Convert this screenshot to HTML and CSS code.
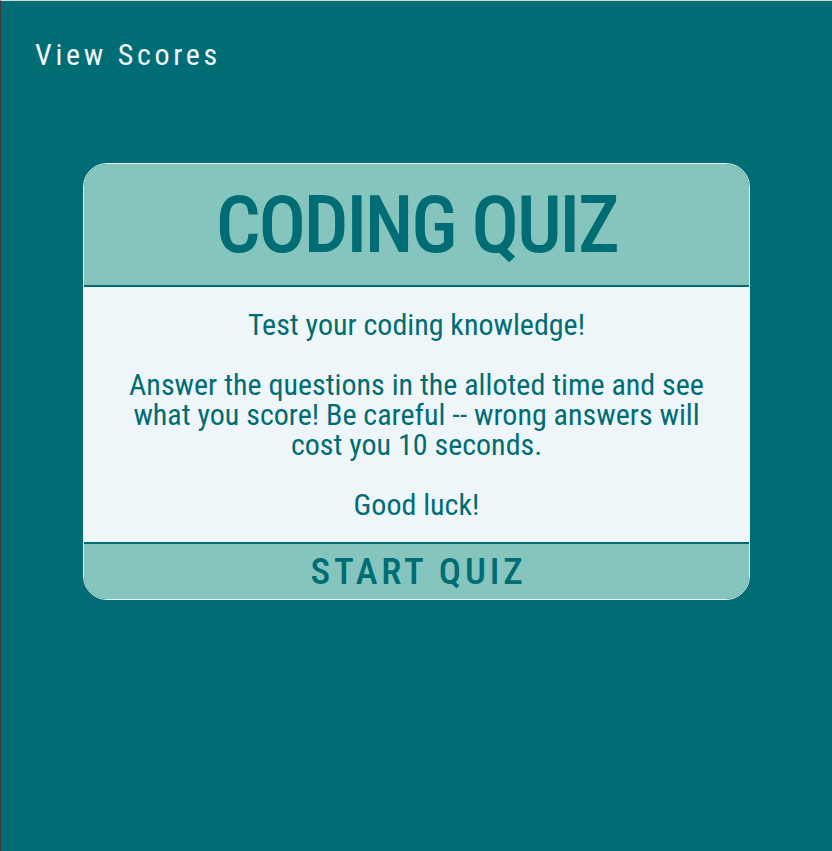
FILE: index.html
```html
<!DOCTYPE html>
<html lang="en">
<head>
<meta charset="utf-8">
<title>Coding Quiz</title>
<link rel="stylesheet" href="styles.css">
</head>
<body>
<header class="topbar">
  <a class="view-scores" href="#">View Scores</a>
</header>
<main class="main">
  <section class="card">
    <div class="card-header">
      <h1 class="title">CODING QUIZ</h1>
    </div>
    <div class="card-body">
      <p class="intro">Test your coding knowledge!<br><br>Answer the questions in the alloted time and see what you score! Be careful -- wrong answers will cost you 10 seconds.<br><br>Good luck!</p>
    </div>
    <button class="start-btn" type="button">START QUIZ</button>
  </section>
</main>
</body>
</html>
```
FILE: styles.css
```css
html {
  background: #006d74;
  border-top: 1px solid #d8dcdc;
  border-left: 1px solid #3c3c3c;
  min-height: 100%;
  box-sizing: border-box;
}
body {
  margin: 0;
  font-family: "Roboto Condensed", Roboto, sans-serif;
  font-stretch: condensed;
  color: #006d74;
}
.topbar {
  padding: 36px 0 0 34px;
}
.view-scores {
  display: inline-block;
  font-size: 30px;
  letter-spacing: 3.7px;
  color: #eef6f9;
  text-decoration: none;
}
.main {
  display: flex;
  justify-content: center;
  padding-top: 91px;
}
.card {
  width: 665px;
  border: 1px solid #e6f2f2;
  border-radius: 24px;
  overflow: hidden;
  display: flex;
  flex-direction: column;
}
.card-header {
  background: #86c5be;
  padding: 15px 0 13px;
  border-bottom: 2px solid #006d74;
  text-align: center;
}
.title {
  margin: 0;
  font-size: 79px;
  font-weight: 500;
  letter-spacing: -2.2px;
  line-height: 93px;
  color: #006d74;
}
.card-body {
  background: #eef6f9;
  padding: 23px 40px 22px;
  border-bottom: 2px solid #006d74;
}
.intro {
  margin: 0;
  font-size: 30px;
  line-height: 30px;
  text-align: center;
  color: #006d74;
}
.start-btn {
  display: block;
  width: 100%;
  margin: 0;
  border: 0;
  background: #86c5be;
  padding: 6px 0 6px 4px;
  font-family: inherit;
  font-stretch: condensed;
  font-size: 37px;
  font-weight: 500;
  letter-spacing: 3.8px;
  line-height: 43px;
  color: #006d74;
  cursor: pointer;
}
```
